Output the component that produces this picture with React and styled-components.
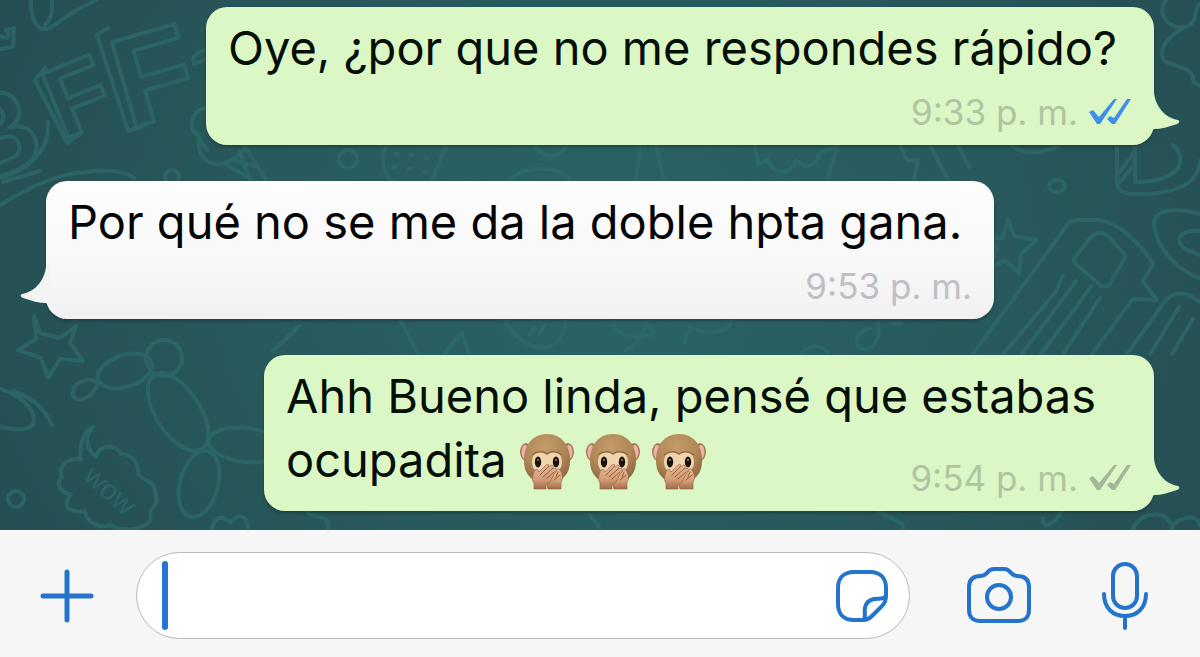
import React from "react";
import styled, { createGlobalStyle } from "styled-components";

const GlobalStyle = createGlobalStyle`
  *, *::before, *::after { box-sizing: border-box; }
  body {
    margin: 0;
    background: #f6f6f6;
    font-family: Inter, "Liberation Sans", sans-serif;
  }
`;

const Screen = styled.div`
  display: flex;
  flex-direction: column;
  min-height: 100vh;
`;

const Chat = styled.main`
  position: relative;
  flex: 1;
  overflow: hidden;
  background: radial-gradient(ellipse 62% 120% at 52% 50%, #2b6465 0%, #28595c 50%, #244c51 100%);
`;

const WallpaperArt = styled.svg`
  position: absolute;
  inset: 0;
  width: 100%;
  height: 100%;
  fill: none;
  stroke: #2e6a6b;
  stroke-width: 4;
  stroke-linecap: round;
  stroke-linejoin: round;
  opacity: 0.75;
`;

const DoodleLetter = styled.text`
  font-family: "Liberation Sans", sans-serif;
  font-weight: 700;
  font-size: ${(p) => p.$size}px;
`;

const DoodleWord = styled.text`
  font-family: "Liberation Sans", sans-serif;
  font-size: 29px;
  fill: #2e6a6b;
  stroke: none;
`;

const Thread = styled.ol`
  position: relative;
  display: flex;
  flex-direction: column;
  gap: 36px;
  margin: 0;
  padding: 7px 46px 19px;
  list-style: none;
`;

const Bubble = styled.li`
  position: relative;
  display: flow-root;
  align-self: ${(p) => (p.$sent ? "flex-end" : "flex-start")};
  width: ${(p) => p.$width};
  max-width: 100%;
  padding: 9px 22px 19px;
  border-radius: 21px;
  font-size: 47px;
  line-height: 64px;
  color: ${(p) => (p.$sent ? "#050f05" : "#050505")};
  background: ${(p) => (p.$sent ? "#dbf7c5" : "linear-gradient(#fdfdfd, #f9f9fa 50%, #f1f1f2)")};
  box-shadow: 0 2px 3px rgba(20, 40, 45, 0.45);
`;

const Tail = styled.svg`
  position: absolute;
  bottom: 13px;
  width: 30px;
  height: 40px;
  ${(p) => (p.$sent ? "right: -26px;" : "left: -26px; transform: scaleX(-1);")}
  fill: ${(p) => (p.$sent ? "#dbf7c5" : "#f4f4f5")};
`;

const Meta = styled.span`
  float: right;
  display: flex;
  align-items: center;
  gap: 10px;
  margin-top: ${(p) => (p.$ownLine ? "18px" : "36px")};
  font-size: 35px;
  line-height: 28px;
  color: ${(p) => (p.$sent ? "#afc5a2" : "#bfbfc4")};
`;

const Ticks = styled.svg`
  width: 44px;
  height: 28px;
  fill: ${(p) => (p.$read ? "#3f8fe8" : "#a3b698")};
`;

const Emoji = styled.svg`
  width: 54px;
  height: 56px;
  margin-right: 12px;
  vertical-align: -13px;
`;

const Composer = styled.form`
  display: flex;
  align-items: center;
  gap: 42px;
  padding: 21px 52px 18px 40px;
  border-top: 1px solid #fdfdfd;
  background: #f6f6f6;
`;

const IconButton = styled.button`
  display: flex;
  flex: none;
  padding: 0;
  border: 0;
  background: none;
  color: #2474cc;
  cursor: pointer;
`;

const Icon = styled.svg`
  display: block;
  fill: none;
  stroke: currentColor;
  stroke-width: 4;
  stroke-linecap: round;
  stroke-linejoin: round;
`;

const Field = styled.div`
  display: flex;
  flex: 1;
  align-items: center;
  min-width: 0;
  height: 87px;
  padding: 0 21px 0 25px;
  border: 1px solid #b9b9bb;
  border-radius: 44px;
  background: #fff;
`;

const Caret = styled.span`
  flex: none;
  width: 6px;
  height: 69px;
  border-radius: 3px;
  background: #2376d8;
`;

const TextInput = styled.input`
  flex: 1;
  min-width: 0;
  height: 69px;
  padding: 0;
  border: 0;
  outline: 0;
  background: transparent;
  font: inherit;
  font-size: 47px;
  caret-color: transparent;
`;

const Actions = styled.div`
  display: flex;
  align-items: center;
  gap: 71px;
  margin-left: 15px;
`;

function Wallpaper() {
  return (
    <WallpaperArt viewBox="0 0 1200 530" preserveAspectRatio="xMidYMin slice" aria-hidden="true">
      <path d="M31 0C30 20 38 31 47 29C58 26 60 17 96 0M45 25C54 16 52 8 52 0" />
      <path d="M0 36C8 40 12 36 6 30L14 28L13 47L0 49" />
      <DoodleLetter $size={118} transform="translate(-32 188) rotate(-20)">B</DoodleLetter>
      <DoodleLetter $size={100} transform="translate(62 140) rotate(-22)">F</DoodleLetter>
      <DoodleLetter $size={128} transform="translate(128 129) rotate(-16)">F</DoodleLetter>
      <path d="M97 35L128 131L145 125M97 35L108 28M35 80L67 143L80 134M35 80L45 68M0 178C30 170 50 150 48 122" />
      <path d="M193 60C194 55 199 51 205 50M194 64L205 60" />
      <path d="M205 108C190 112 187 128 199 136C195 157 211 168 224 163C236 160 239 153 246 148M198 137L207 150M224 163L252 180M246 148L266 180M232 160L256 166M240 152L248 176" />
      <circle cx="348" cy="159" r="9" />
      <circle cx="172" cy="177" r="7" />
      <path d="M0 205C25 190 54 174 86 172Q122 168 134 178M3 182L40 171" />
      <path d="M388 143C378 160 384 181 400 184H430L447 145" />
      <path d="M395 154H398M410 155H413M425 158H428M393 167H396M408 169H411M423 172H426" />
      <path d="M535 147C545 160 562 158 567 144M510 180C525 165 560 165 570 180M640 147L636 180M656 147L664 180M755 145L758 164L768 160C774 176 790 176 796 160C806 172 817 165 819 153L838 146L828 176" />
      <path d="M900 145L907 160L918 160L914 180M930 145L948 180M958 145L969 167M1012 146C1025 156 1045 153 1060 145" />
      <path d="M1166 0C1158 12 1164 28 1184 27C1200 25 1192 8 1200 4M1184 28C1163 38 1157 55 1166 62C1180 67 1196 70 1193 82L1200 86" />
      <path d="M1117 145V185Q1120 195 1137 194C1180 195 1200 180 1200 160M1135 145V182C1160 182 1183 175 1180 156C1179 150 1176 148 1173 145M1118 174L1135 151M1118 184L1135 164" />
      <ellipse cx="1057" cy="186" rx="8" ry="6" />
      <path d="M1200 214C1175 207 1153 209 1154 225C1157 250 1180 272 1200 278M1200 231C1180 229 1174 240 1185 249L1200 255" />
      <path d="M1008 219L1014 236L1037 240L1021 254L1019 273L1004 260L988 270L997 249L988 238L1003 238Z" />
      <path d="M973 354L997 321L1068 224Q1073 219 1083 220H1098C1120 222 1142 246 1153 264L1143 281L1157 300L1133 299L1092 354M1076 256L1090 238Q1100 228 1111 239L1126 256L1110 284Q1105 290 1097 282L1076 264Q1072 260 1076 256Z" />
      <path d="M1063 276L1055 293L1003 354M1076 281L1062 300L1022 354M1091 286L1074 310L1041 354M1100 298L1063 354M1127 354L1166 300Q1180 286 1200 302M1150 354L1179 307M1172 354L1193 319" />
      <path d="M34 316L40 333L60 338L76 326L70 343L83 361L60 359L48 378L41 358L18 350L36 339Z" />
      <ellipse cx="125" cy="371" rx="28" ry="16" transform="rotate(-18 125 371)" />
      <circle cx="164" cy="358" r="18" />
      <ellipse cx="178" cy="412" rx="22" ry="44" transform="rotate(-33 178 412)" />
      <ellipse cx="246" cy="445" rx="38" ry="17" transform="rotate(7 246 445)" />
      <ellipse cx="199" cy="484" rx="19" ry="34" transform="rotate(15 199 484)" />
      <path d="M98 382C86 376 70 384 73 396C77 404 94 398 98 382ZM0 389C18 394 34 407 34 420C34 432 16 430 0 427M13 391Q42 401 52 425" />
      <path d="M93 427C82 433 79 446 81 459C68 458 57 466 62 477C53 486 65 494 71 494C58 510 76 513 85 511C87 524 101 529 110 525C123 533 149 529 151 518C147 507 161 508 155 491C154 479 139 480 138 473C138 459 129 454 121 454C115 442 97 446 96 457C88 450 82 440 93 427" />
      <DoodleWord x="82" y="478" transform="rotate(42 82 478)">wow</DoodleWord>
      <circle cx="16" cy="499" r="8" />
      <path d="M212 528C216 516 221 515 231 523C237 513 247 514 248 528M273 351L300 325" />
      <path d="M400 320L418 353M444 354L462 333L469 354M504 320C525 354 560 360 566 320M535 328L529 335M545 325L539 334M613 320C614 334 628 339 643 336C656 337 657 326 646 326L641 338L624 352M684 342L690 327C705 334 730 335 731 320M802 353C810 345 819 344 827 352M877 320C882 335 875 352 861 349C852 343 859 330 870 328M893 324H902" />
      <path d="M308 513C320 519 330 515 328 529M590 515L600 529M878 511C888 518 905 521 903 529M1043 518C1041 530 1052 527 1062 511M1133 529C1140 511 1170 508 1172 529M1172 527C1180 515 1200 514 1200 527" />
    </WallpaperArt>
  );
}

function Monkey() {
  return (
    <Emoji viewBox="0 0 54 56" role="img" aria-label="Mono tapándose la boca">
      <defs>
        <radialGradient id="fur" cx="45%" cy="28%" r="70%">
          <stop offset="0" stopColor="#c49c6b" />
          <stop offset="0.65" stopColor="#b08656" />
          <stop offset="1" stopColor="#926a45" />
        </radialGradient>
        <linearGradient id="skin" x2="0" y2="1">
          <stop offset="0" stopColor="#e6b892" />
          <stop offset="0.6" stopColor="#d39e78" />
          <stop offset="1" stopColor="#a06c48" />
        </linearGradient>
      </defs>
      <ellipse cx="6" cy="18" rx="6" ry="9" fill="#a47b50" />
      <ellipse cx="48" cy="18" rx="6" ry="9" fill="#a47b50" />
      <ellipse cx="5" cy="18" rx="3.5" ry="7" fill="#eeb0a8" />
      <ellipse cx="49" cy="18" rx="3.5" ry="7" fill="#eeb0a8" />
      <path d="M27 0C12 0 4 12 4 26C4 34 6 40 12 45C16 48 21 49 27 49S38 48 42 45C48 40 50 34 50 26C50 12 42 0 27 0Z" fill="url(#fur)" />
      <path d="M27 21C22 14 12 17 12 28C12 34 16 38 20 40H34C38 38 42 34 42 28C42 17 32 14 27 21Z" fill="#efd5ac" />
      <path d="M12 21Q20 15 27 20Q34 15 42 21" fill="none" stroke="#94693f" strokeWidth="1.4" />
      <ellipse cx="18" cy="28" rx="3.2" ry="5.4" fill="#1c120d" />
      <ellipse cx="36" cy="28" rx="3.2" ry="5.4" fill="#1c120d" />
      <circle cx="18" cy="26" r="1" fill="#a18977" />
      <circle cx="36" cy="26" r="1" fill="#a18977" />
      <path d="M41 55V48C44 44 42 38 39 35Q36 34 36 38L29 40L26 48L28 55Z" fill="url(#skin)" stroke="#9b6845" strokeWidth="0.7" />
      <path d="M14 55V49C11 45 13 40 15 36Q18 34 19 38L26 31Q30 29 28 33L32 31Q35 32 32 35L35 34Q38 36 34 40L30 48L26 51V55Z" fill="url(#skin)" stroke="#9b6845" strokeWidth="0.7" />
      <path d="M20 41L28 33M23 43L32 35M26 45L34 38M36 43L38 38M34 46L40 41" fill="none" stroke="#915f40" strokeWidth="1" strokeLinecap="round" />
    </Emoji>
  );
}

function Message({ sent, width, metaOwnLine, time, status, children }) {
  return (
    <Bubble $sent={sent} $width={width}>
      <Tail $sent={sent} viewBox="0 0 30 40" aria-hidden="true">
        <path d="M0 0H4C5 14 15 26 28 28Q31 30 27 32C18 35 11 37 4 37L0 40Z" />
      </Tail>
      {children}
      <Meta $sent={sent} $ownLine={metaOwnLine}>
        <time>{time}</time>
        {status && (
          <Ticks $read={status === "read"} viewBox="0 0 44 28" role="img" aria-label={status === "read" ? "Leído" : "Entregado"}>
            <path d="M1 14L5 12L11 19L26 1H29L12 26H9Z" />
            <path d="M19 21L22 18L26 20L39 1H43L27 26H24Z" />
          </Ticks>
        )}
      </Meta>
    </Bubble>
  );
}

export default function App() {
  return (
    <Screen>
      <GlobalStyle />
      <Chat>
        <Wallpaper />
        <Thread>
          <Message sent width="948px" metaOwnLine time="9:33 p. m." status="read">
            Oye, ¿por que no me respondes rápido?
          </Message>
          <Message width="948px" metaOwnLine time="9:53 p. m.">
            Por qué no se me da la doble hpta gana.
          </Message>
          <Message sent width="890px" time="9:54 p. m." status="delivered">
            Ahh Bueno linda, pensé que estabas ocupadita <Monkey /><Monkey /><Monkey />
          </Message>
        </Thread>
      </Chat>
      <Composer onSubmit={(e) => e.preventDefault()}>
        <IconButton type="button" aria-label="Adjuntar">
          <Icon width="54" height="54" viewBox="0 0 54 54">
            <path d="M27 3V51M3 27H51" strokeWidth="5" />
          </Icon>
        </IconButton>
        <Field>
          <Caret />
          <TextInput type="text" aria-label="Mensaje" />
          <IconButton type="button" aria-label="Stickers">
            <Icon width="52" height="52" viewBox="0 0 52 52">
              <path d="M28 50H18C8 50 2 44 2 34V18C2 8 8 2 18 2H34C44 2 50 8 50 18V26C50 31 49 33 46 36L37 45C34 48 32 50 28 50ZM28 50C30 46 28 42 29 38C30 32 33 30 38 29C43 28 47 30 50 26" />
            </Icon>
          </IconButton>
        </Field>
        <Actions>
          <IconButton type="button" aria-label="Cámara">
            <Icon width="64" height="58" viewBox="0 0 64 58">
              <path d="M14 9C17 9 18 8 20 6C22 3 24 2 27 2H37C40 2 42 3 44 6C46 8 47 9 50 9C58 9 62 13 62 20V43C62 50 58 54 51 54H13C6 54 2 50 2 43V20C2 13 6 9 14 9Z" />
              <circle cx="32" cy="30" r="12" />
            </Icon>
          </IconButton>
          <IconButton type="button" aria-label="Grabar audio">
            <Icon width="46" height="68" viewBox="0 0 46 68">
              <rect x="11" y="2" width="24" height="44" rx="12" />
              <path d="M2 32C2 46 11 54 23 54S44 46 44 32M23 54V66" />
            </Icon>
          </IconButton>
        </Actions>
      </Composer>
    </Screen>
  );
}
